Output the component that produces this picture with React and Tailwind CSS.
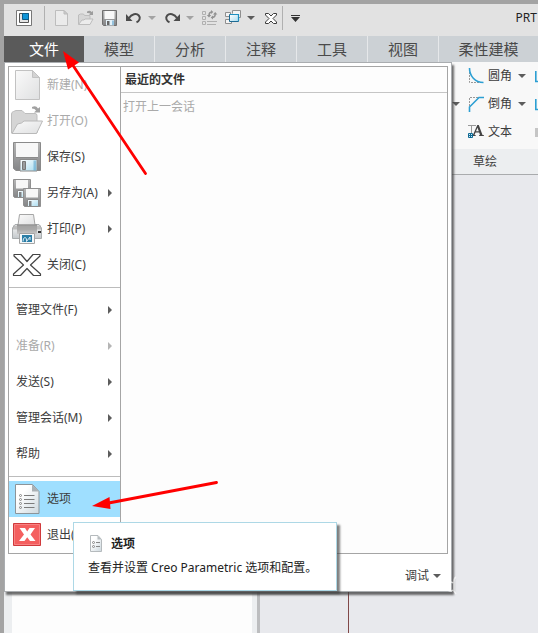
import React from 'react';

const FONT = "font-['Noto_Sans','Noto_Sans_CJK_SC',sans-serif]";

function Defs() {
  return (
    <svg className="absolute h-0 w-0" aria-hidden="true">
      <defs>
        <linearGradient id="paper" x1="0" y1="0" x2="1" y2="1">
          <stop offset="0" stopColor="#fafafa" />
          <stop offset="1" stopColor="#dfe0e1" />
        </linearGradient>
        <linearGradient id="sheet" x1="0" y1="0" x2="1" y2="1">
          <stop offset="0.3" stopColor="#ffffff" />
          <stop offset="1" stopColor="#cdd8de" />
        </linearGradient>
        <linearGradient id="metal" x1="0" y1="0" x2="0" y2="1">
          <stop offset="0" stopColor="#b5b5b5" />
          <stop offset="1" stopColor="#848587" />
        </linearGradient>
        <linearGradient id="glass" x1="0" y1="0" x2="1" y2="1">
          <stop offset="0" stopColor="#ffffff" />
          <stop offset="1" stopColor="#a9dcf0" />
        </linearGradient>
        <linearGradient id="body" x1="0" y1="0" x2="0" y2="1">
          <stop offset="0" stopColor="#f8f8f8" />
          <stop offset="1" stopColor="#c3c8cb" />
        </linearGradient>
        <linearGradient id="tray" x1="0" y1="0" x2="0" y2="1">
          <stop offset="0" stopColor="#8a8a8a" />
          <stop offset="1" stopColor="#c9c9c9" />
        </linearGradient>
      </defs>
    </svg>
  );
}

/* ---------- glyphs ---------- */

function Caret({ className = 'text-[#5c5c5c]' }) {
  return (
    <svg width="8" height="4" viewBox="0 0 8 4" className={className} aria-hidden="true">
      <path d="M0 0h8L4 4z" fill="currentColor" />
    </svg>
  );
}

function SubArrow({ className }) {
  return (
    <svg width="4" height="8" viewBox="0 0 4 8" className={className} aria-hidden="true">
      <path d="M0 0L4 4L0 8z" fill="currentColor" />
    </svg>
  );
}

function Icon({ size = 32, children }) {
  return (
    <svg width={size} height={size} viewBox={`0 0 ${size} ${size}`} fill="none" className="shrink-0" aria-hidden="true">
      {children}
    </svg>
  );
}

function Disk() {
  return (
    <>
      <path d="M.5 .5h27v28H3l-2.500-2z" fill="url(#metal)" stroke="#8a8a8a" />
      <path d="M3 1h22v14H3z" fill="#f7f7f7" />
      <path d="M3 15.500h22" stroke="#8b8b8b" />
      <path d="M7 17.500h17V29H7z" fill="url(#glass)" stroke="#8a8a8a" />
      <path d="M9.500 19.500h3v8h-3z" fill="#9a9c9e" stroke="#777" />
      <path d="M20.500 18.500h2.500v10h-2.500z" fill="#4a97c4" opacity=".5" />
    </>
  );
}

function SmallDisk() {
  return (
    <>
      <path d="M.5 .5h17v18h-16l-1-1z" fill="url(#metal)" stroke="#909090" />
      <path d="M3 1h12v8.500H3z" fill="#f7f7f7" />
      <path d="M4.500 11.500h11v7h-11z" fill="url(#glass)" stroke="#8a8a8a" />
      <path d="M6 13h2.500v5H6z" fill="#808284" />
    </>
  );
}

const icons = {
  create: (
    <Icon>
      <path d="M4.500 1.500h17l7 7v22h-24z" fill="url(#paper)" stroke="#c2c2c2" />
      <path d="M21.500 1.500v7h7z" fill="#d3d3d3" stroke="#c2c2c2" />
    </Icon>
  ),
  open: (
    <Icon>
      <path d="M.5 28V9q0-2 2-2.500L5 5.500h6l3 3h10q2 0 2 2V28z" fill="#d5d5d5" stroke="#bdbdbd" />
      <path d="M1 28.500L6.500 19l4-1L13 16h18.500l-6 12.500z" fill="url(#paper)" stroke="#b9b9b9" />
      <path d="M21 2q4-2 6 1.500l2-1.500v5.500h-6l2-2q-1-2-4-2z" fill="#a2a2a2" />
    </Icon>
  ),
  save: (
    <Icon>
      <g transform="translate(2 1)"><Disk /></g>
    </Icon>
  ),
  saveAs: (
    <Icon>
      <g transform="translate(2 2)"><SmallDisk /></g>
      <g transform="translate(12 11)"><SmallDisk /></g>
    </Icon>
  ),
  print: (
    <Icon>
      <path d="M1.500 15L4 11.500h24l2.500 3.500v10.500h-29z" fill="url(#body)" stroke="#a9adaf" />
      <path d="M7 12l1.500-10.500h14L24 12z" fill="url(#paper)" stroke="#a5a5a5" />
      <path d="M6 11.500h20V21H6z" fill="url(#tray)" />
      <path d="M2 12.500h28v4H2z" fill="#a9a9a9" opacity=".7" />
      <path d="M27 18h3v2h-3z" fill="#333" />
      <path d="M8.500 20.500h15v10h-15z" fill="#f4f8fa" stroke="#a5a5a5" />
      <path d="M11 22h10v7H11z" fill="#2b7ea6" />
      <path d="M12 28.500q0-4 2-4t1.500 4l3.500-4.500v3" stroke="#dceaf2" />
    </Icon>
  ),
  close: (
    <Icon>
      <path
        d="M3 5.500h7l6 7 6-7h7v1.500L19.500 16 29.500 25v1.500h-7l-6.500-7-6.500 7h-7V25L12.500 16 3 7z"
        fill="#fff"
        stroke="#444"
        strokeWidth="1.200"
        strokeLinejoin="round"
      />
    </Icon>
  ),
  options: (
    <Icon>
      <path d="M4.500 1.500h17l6.500 7v22H4.500z" fill="url(#sheet)" stroke="#8c9499" />
      <path d="M21 1.500v7h7z" fill="#aab0b4" />
      <path d="M13 12.500h10.500M13 16.500h10.500M13 20.500h10.500M13 24.500h10.500" stroke="#7c7c7c" />
      <g stroke="#7c7c7c" strokeWidth=".9">
        <circle cx="9.500" cy="12.500" r="1" />
        <circle cx="9.500" cy="16.500" r="1" />
        <circle cx="9.500" cy="20.500" r="1" />
        <circle cx="9.500" cy="24.500" r="1" />
      </g>
    </Icon>
  ),
  exit: (
    <Icon>
      <path d="M2.500 4.500h27v22h-27z" fill="#f45f5f" stroke="#d03a3c" />
      <path d="M3.500 5.500h25v20h-25z" stroke="#f88383" />
      <path d="M8.500 9h5.500l2.200 3.500L18.500 9H24l-4.500 6.500L24.500 22H19l-2.800-3.700L13.500 22H8l5-6.500z" fill="#fff" />
    </Icon>
  ),
};

const tools = {
  window: (
    <Icon size={16}>
      <path d="M.5 .5h15v15H.5z" fill="#fff" stroke="#777" />
      <path d="M3.500 3.500h9v9h-9z" fill="#e4e4e4" stroke="#555" />
      <path d="M6.500 3.500h6v6h-6z" fill="#1095d8" stroke="#0d5b88" />
    </Icon>
  ),
  create: (
    <Icon size={16}>
      <path d="M1.500 .5h8.500l3.500 3.500v11.500h-12z" fill="#ebebeb" stroke="#bdbdbd" />
      <path d="M10 .5v3.500h3.500z" fill="#ccc" stroke="#bbb" />
    </Icon>
  ),
  open: (
    <Icon size={16}>
      <path d="M.5 14V5l2-1h3l1 1.500h5.500V14z" fill="#d6d6d6" stroke="#bdbdbd" />
      <path d="M.5 14.500L4 10h2l1-1h8l-3 5.500z" fill="#ececec" stroke="#bdbdbd" />
      <path d="M9 1.500q3-1.500 4.500 .5L15 1v4h-4l1.300-1.300Q11.500 2.800 9 3z" fill="#9d9d9d" />
    </Icon>
  ),
  save: (
    <Icon size={16}>
      <path d="M.5 .5h14v15H1.500l-1-1z" fill="url(#metal)" stroke="#707070" />
      <path d="M2.500 1h10v8h-10z" fill="#f8f8f8" />
      <path d="M4 10h8v5.500H4z" fill="#e4f1f8" />
      <path d="M5 11h2.500v4H5z" fill="#686868" />
      <path d="M10.500 10.500h1V15h-1z" fill="#4793c2" />
    </Icon>
  ),
  undo: (
    <Icon size={16}>
      <path d="M3 8C5.500 4 10.500 3 12.800 5.500c2 2.300 .8 5.500-2.300 6.700" stroke="#4b4b4b" strokeWidth="2" />
      <path d="M0 4v7h6.500z" fill="#4b4b4b" />
    </Icon>
  ),
  redo: (
    <Icon size={16}>
      <path d="M13 8C10.500 4 5.500 3 3.200 5.500c-2 2.300-.8 5.500 2.300 6.700" stroke="#4b4b4b" strokeWidth="2" />
      <path d="M16 4v7H9.500z" fill="#4b4b4b" />
    </Icon>
  ),
  regenerate: (
    <Icon size={16}>
      <path d="M.5 1.500h3v3h-3zM.5 6.500h3v3h-3zM.5 11.500h3v3h-3z" stroke="#b0b0b0" />
      <path d="M5 11.500h10M5 14.500h9" stroke="#b0b0b0" />
      <path d="M7 5.500Q7 2.300 9.500 2M13.200 3.500q.3 3.500-2.700 4" stroke="#929292" strokeWidth="1.500" />
      <path d="M9 0v4L11.300 2zM11 5.500v4L8.700 7.500zM4.800 5h4.400L7 7.500zM11 4.500h4.400L13.200 2z" fill="#929292" />
    </Icon>
  ),
  windows: (
    <Icon size={16}>
      <path d="M7.500 3.500v-3h8v7h-2" fill="#f4f4f4" stroke="#8f8f8f" />
      <path d="M.5 2.500h5v4h-5zM.5 9.500h6v4h-6z" fill="#f4f4f4" stroke="#8f8f8f" />
      <path d="M4.500 4.500h9v7h-9z" fill="url(#glass)" stroke="#1d6a93" />
      <path d="M5 4.500h8.500V11" stroke="#1d8fc0" strokeWidth="1.200" />
    </Icon>
  ),
  close: (
    <svg width="12" height="11" viewBox="0 0 12 11" fill="none" aria-hidden="true">
      <path d="M.5 .5h3L6 3 8.500 .5h3v1.500L8 5.500 11.500 9v1.500h-3L6 8l-2.500 2.500h-3V9L4 5.500 .5 2z" fill="#fff" stroke="#3c3c3c" />
    </svg>
  ),
};

/* ---------- top bars ---------- */

function Tool({ label, children }) {
  return (
    <button type="button" aria-label={label} className="flex items-center">
      {children}
    </button>
  );
}

function QuickBar() {
  return (
    <header className="flex h-7 items-center gap-2 bg-[#e2e2e2] pl-3">
      <div className="flex h-6 items-center border-r border-[#b0b0b0] pr-3">
        <Tool label="窗口">{tools.window}</Tool>
      </div>
      <div className="flex items-center gap-2 pl-px">
        <Tool label="新建">{tools.create}</Tool>
        <Tool label="打开">{tools.open}</Tool>
        <Tool label="保存">{tools.save}</Tool>
      </div>
      <div className="flex items-center gap-1.5">
        <Tool label="撤消">{tools.undo}</Tool>
        <Tool label="撤消列表"><Caret className="text-[#a3a3a3]" /></Tool>
      </div>
      <div className="flex items-center gap-1.5">
        <Tool label="重做">{tools.redo}</Tool>
        <Tool label="重做列表"><Caret className="text-[#a3a3a3]" /></Tool>
      </div>
      <div className="flex items-center gap-[7px]">
        <Tool label="重新生成">{tools.regenerate}</Tool>
        <div className="flex items-center gap-1.5">
          <Tool label="切换窗口">{tools.windows}</Tool>
          <Tool label="窗口列表"><Caret /></Tool>
        </div>
      </div>
      <div className="flex h-6 w-5 items-center border-r border-[#b0b0b0] pl-0.5">
        <Tool label="关闭窗口">{tools.close}</Tool>
      </div>
      <Tool label="自定义">
        <svg width="9" height="7" viewBox="0 0 9 7" aria-hidden="true">
          <path d="M0 0h9v1H0zM0 2h9L4.500 7z" fill="#333" />
        </svg>
      </Tool>
      <h1 className="ml-auto pr-px text-[12px] leading-4 text-[#222]">PRT</h1>
    </header>
  );
}

const tabs = ['模型', '分析', '注释', '工具', '视图'];

function TabBar() {
  return (
    <nav className="flex h-[26px] bg-[#ccd1d5] text-[15px] leading-6 text-[#4a4a4a]">
      <button type="button" className="w-20 bg-[#5a5a5a] text-white">文件</button>
      {tabs.map((name) => (
        <button key={name} type="button" className="w-[71px] border-r border-[#e6e8ea]">{name}</button>
      ))}
      <button type="button" className="grow">柔性建模</button>
    </nav>
  );
}

/* ---------- ribbon ---------- */

const roundIcon = (
  <Icon size={16}>
    <path d="M1.500 4v10.500H13" stroke="#999" strokeDasharray="2 1" />
    <path d="M1.500 0C1.500 8 7 14.500 15.500 14.500" stroke="#2c9fd3" strokeWidth="1.600" />
  </Icon>
);
const chamferIcon = (
  <Icon size={16}>
    <path d="M1.500 10V1.500H10" stroke="#999" strokeDasharray="2 1" />
    <path d="M1.500 16v-5L11 1.500h5" stroke="#2c9fd3" strokeWidth="1.600" />
  </Icon>
);
const textIcon = (
  <Icon size={16}>
    <path d="M0 1.500h8M3.500 2v8" stroke="#999" />
    <path d="M4.500 12L9.300 1h1.500L14.500 11l1.500 .3V12h-5v-.7l1-.3-.8-2.500H7.500L6.500 11l1.300 .3V12zM8 7.300h2.800L9.500 3.800z" fill="#444" />
    <path d="M.5 9.500h4v4h-4z" fill="#d5edf8" stroke="#0f6a94" />
    <path d="M2.500 9.500v4M.5 11.500h4" stroke="#0f6a94" />
  </Icon>
);

function Ribbon() {
  return (
    <section className="flex h-[113px] flex-col border-b border-[#a9abad] bg-[#f8f8f8] text-[12px] text-[#3c3c3c]">
      <div className="flex h-[87px] justify-end overflow-hidden">
        <div className="flex w-[86px] shrink-0 items-start gap-1">
          <button type="button" aria-label="更多" className="flex h-[84px] items-center"><Caret /></button>
          <ul className="pl-1">
            {[[roundIcon, '圆角', true], [chamferIcon, '倒角', true], [textIcon, '文本', false]].map(([icon, name, more]) => (
              <li key={name}>
                <button type="button" className="flex h-7 items-center gap-1">
                  {icon}
                  <span className="mr-0.5">{name}</span>
                  {more && <Caret />}
                </button>
              </li>
            ))}
          </ul>
          <svg width="4" height="84" viewBox="0 0 4 84" fill="none" className="ml-1 shrink-0" aria-hidden="true">
            <path d="M1.800 9v10.500H4M1.800 37v10.500H4" stroke="#2c9fd3" strokeWidth="1.600" />
            <path d="M1 66h3v9H1z" fill="#c5c5c5" />
          </svg>
        </div>
      </div>
      <div className="flex grow items-center justify-end bg-[#eceef0] pr-[41px]">草绘</div>
    </section>
  );
}

/* ---------- file menu ---------- */

const fileItems = [
  { icon: 'create', label: '新建(N)', off: true },
  { icon: 'open', label: '打开(O)', off: true },
  { icon: 'save', label: '保存(S)' },
  { icon: 'saveAs', label: '另存为(A)', sub: true },
  { icon: 'print', label: '打印(P)', sub: true },
  { icon: 'close', label: '关闭(C)' },
];
const manageItems = [
  { label: '管理文件(F)', sub: true },
  { label: '准备(R)', sub: true, off: true },
  { label: '发送(S)', sub: true },
  { label: '管理会话(M)', sub: true },
  { label: '帮助', sub: true },
];
const exitItems = [
  { icon: 'options', label: '选项', active: true },
  { icon: 'exit', label: '退出(X)' },
];

function MenuGroup({ items }) {
  return (
    <ul>
      {items.map(({ icon, label, sub, off, active }) => (
        <li key={label}>
          <button
            type="button"
            disabled={off}
            className={`flex h-9 w-full items-center gap-1 pr-2 ${icon ? 'pl-0.5' : 'pl-[7px]'} ${off ? 'text-[#aaa]' : 'text-[#3c3c3c]'} ${active ? 'bg-[#9fdfff]' : ''}`}
          >
            {icon && icons[icon]}
            <span className="mr-auto whitespace-nowrap">{label}</span>
            {sub && <SubArrow className={off ? 'text-[#b5b5b5]' : 'text-[#5c5c5c]'} />}
          </button>
        </li>
      ))}
    </ul>
  );
}

function Rule() {
  return <hr className="my-1 border-[#bcbcbc]" />;
}

function Tooltip() {
  return (
    <div role="tooltip" className="absolute left-[68px] top-[459px] h-[69px] w-[264px] border border-[#add8e6] bg-white pl-3.5 pt-3 text-[12px] leading-4 text-[#222] shadow-[3px_3px_2px_rgba(60,60,60,0.65)]">
      <div className="flex items-center gap-2 font-bold">
        <svg width="15" height="17" viewBox="0 0 15 17" fill="none" aria-hidden="true">
          <path d="M2.500 .5h7.500l3.500 4v12h-11z" fill="url(#sheet)" stroke="#b5babd" />
          <path d="M9.500 .5v4h4z" fill="#b8bdc0" />
          <path d="M8 7.500h4M8 11.500h4" stroke="#888" />
          <circle cx="5.500" cy="7.500" r="1" stroke="#888" />
          <circle cx="5.500" cy="11.500" r="1" stroke="#888" />
        </svg>
        选项
      </div>
      <p className="mt-2 whitespace-nowrap">查看并设置 Creo Parametric 选项和配置。</p>
    </div>
  );
}

function FileMenu() {
  return (
    <div className="absolute left-0 top-0 z-10 w-[448px] border border-[#aaadb0] bg-white p-[3px] pb-0 text-[12px] leading-4 shadow-[2px_3px_2px_rgba(60,60,60,0.75)]">
      <div className="flex border border-[#a5a5a5]">
        <div className="w-28 shrink-0 border-r border-[#a5a5a5]">
          <MenuGroup items={fileItems} />
          <Rule />
          <MenuGroup items={manageItems} />
          <Rule />
          <MenuGroup items={exitItems} />
        </div>
        <div className="grow bg-[#fdfdfd]">
          <h2 className="flex h-[26px] items-center border-b border-[#c5c5c5] pl-1 font-bold text-[#333]">最近的文件</h2>
          <button type="button" disabled className="mt-1.5 px-0.5 text-[#aaa]">打开上一会话</button>
        </div>
      </div>
      <div className="flex h-[37px] items-center justify-end pr-[7px] pt-1.5">
        <button type="button" className="flex items-center gap-1 text-[#3c3c3c]">
          调试
          <Caret />
        </button>
      </div>
      <Tooltip />
    </div>
  );
}

function Workspace() {
  return (
    <main className="flex h-[458px] bg-[#e8e9ed]">
      <aside className="flex w-64 shrink-0 border-r-[3px] border-[#bcbdbf] bg-[#eceef0] pl-2 pr-[5px]">
        <div className="grow bg-[#fdfdfd]" />
      </aside>
      <div className="ml-[88px] w-px bg-[#804848]" />
    </main>
  );
}

function Pointers() {
  return (
    <svg width="538" height="633" viewBox="0 0 538 633" fill="none" className="pointer-events-none" aria-hidden="true">
      <path d="M72 64L145.500 173.500M106 503.500L216.500 482.500" stroke="#f00" strokeWidth="2.800" strokeLinecap="round" />
      <path d="M63 51L79 62.500L68 69.500zM92 506L109.500 497L110.500 509z" fill="#f00" />
      <path d="M453 583a4 4.500 0 1 0 0 7M456 577q-2 1-2 5v9l2 3" stroke="#fff" strokeWidth="1.400" opacity=".65" />
    </svg>
  );
}

export default function App() {
  return (
    <div className={`relative overflow-hidden border-l-4 border-t-4 border-[#a3a3a3] bg-[#e2e2e2] ${FONT}`}>
      <Defs />
      <QuickBar />
      <div className="pt-1">
        <TabBar />
      </div>
      <div className="relative">
        <Ribbon />
        <Workspace />
        <FileMenu />
      </div>
      <div className="absolute -left-1 -top-1 z-20"><Pointers /></div>
    </div>
  );
}
